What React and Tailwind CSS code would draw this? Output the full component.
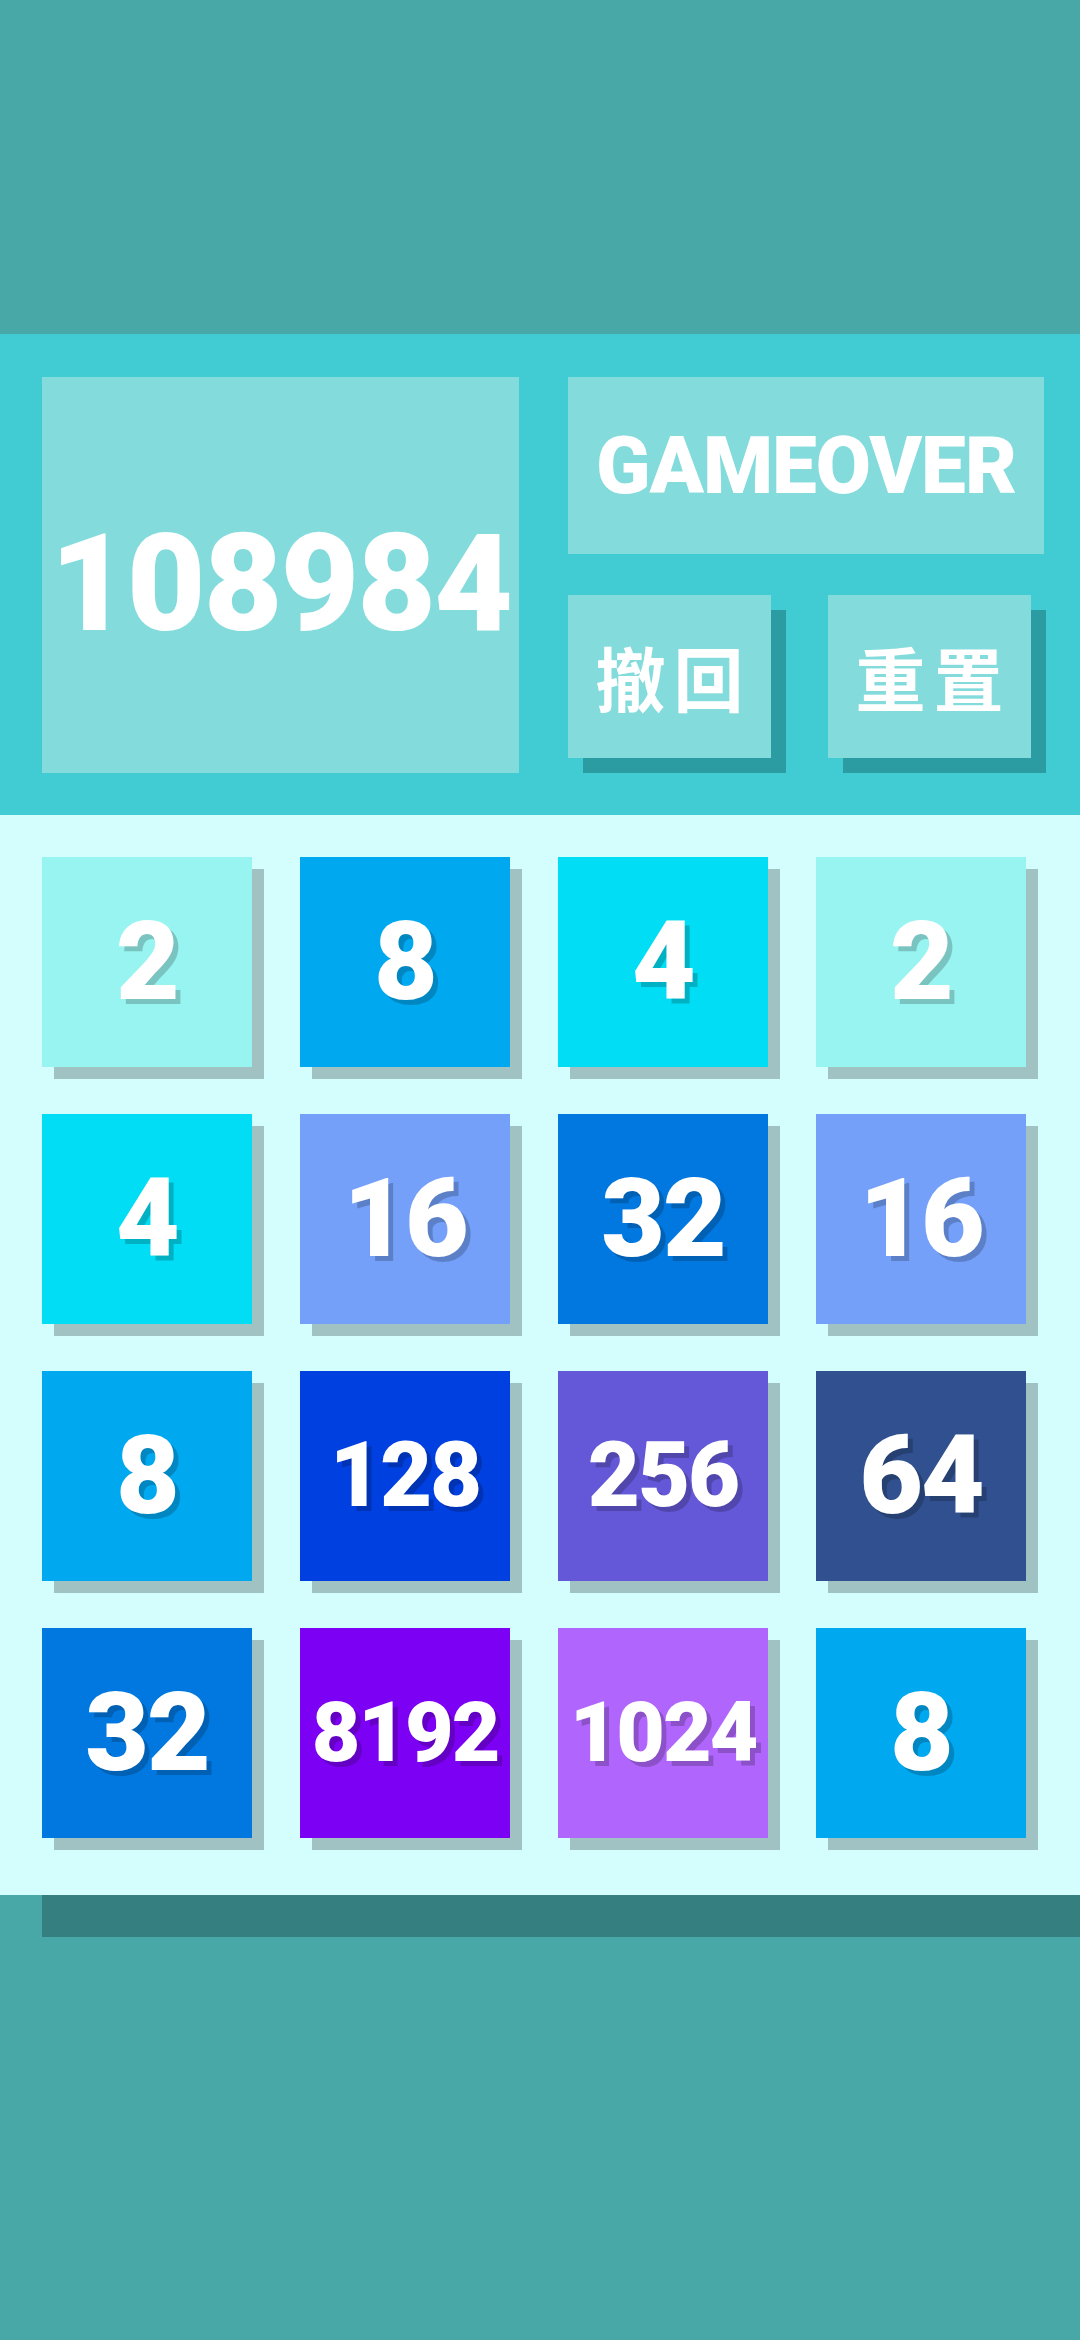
const TILES = [
  [2, 8, 4, 2],
  [4, 16, 32, 16],
  [8, 128, 256, 64],
  [32, 8192, 1024, 8],
];

const TILE_BG = {
  2: 'bg-[#98f4f0]',
  4: 'bg-[#00ddf4]',
  8: 'bg-[#00a8f0]',
  16: 'bg-[#74a0fa]',
  32: 'bg-[#0078e0]',
  64: 'bg-[#30508f]',
  128: 'bg-[#0040e0]',
  256: 'bg-[#6458d8]',
  1024: 'bg-[#b066fc]',
  8192: 'bg-[#7c00f4]',
};

function Tile({ value }) {
  const digits = String(value).length;
  let size = 'text-[110px]';
  if (digits === 3) size = 'text-[90px]';
  if (digits >= 4) size = 'text-[84px]';
  return (
    <div
      className={`w-[210px] h-[210px] flex items-center justify-center shadow-[12px_12px_0_#a0c2c2] ${TILE_BG[value]}`}
    >
      <span
        className={`${size} leading-none font-black text-white tracking-[-2px] [text-shadow:5px_5px_0_rgba(0,0,0,0.2)]`}
      >
        {value}
      </span>
    </div>
  );
}

export default function App() {
  return (
    <div className="w-[1080px] h-[2340px] flex flex-col bg-[#48a8a8] font-['Roboto','Noto_Sans_CJK_SC',sans-serif]">
      {/* top band */}
      <div className="h-[334px] shrink-0 bg-[#48a8a8]" />

      {/* header */}
      <div className="h-[481px] shrink-0 bg-[#40ccd2] pl-[42px] pt-[43px] flex gap-[49px]">
        <div className="w-[477px] h-[396px] bg-[#83dbdc] flex items-center justify-center pt-[18px]">
          <span className="text-[136px] leading-none font-black text-white tracking-[-2px]">108984</span>
        </div>
        <div className="w-[476px] flex flex-col gap-[41px]">
          <div className="h-[177px] bg-[#83dbdc] flex items-center justify-center">
            <span className="text-[80px] leading-none font-black text-white tracking-[-1px]">GAMEOVER</span>
          </div>
          <div className="flex gap-[57px]">
            <button className="w-[203px] h-[163px] bg-[#83dbdc] shadow-[15px_15px_0_#2c9ca3] flex items-center justify-center">
              <span className="text-[70px] leading-none font-bold text-white tracking-[8px] pl-[8px] font-['Noto_Sans_CJK_SC',sans-serif]">撤回</span>
            </button>
            <button className="w-[203px] h-[163px] bg-[#83dbdc] shadow-[15px_15px_0_#2c9ca3] flex items-center justify-center">
              <span className="text-[70px] leading-none font-bold text-white tracking-[8px] pl-[8px] font-['Noto_Sans_CJK_SC',sans-serif]">重置</span>
            </button>
          </div>
        </div>
      </div>

      {/* board */}
      <div className="h-[1080px] shrink-0 bg-[#d4fefe] pl-[42px] pt-[42px]">
        <div className="grid grid-cols-[repeat(4,210px)] gap-x-[48px] gap-y-[47px]">
          {TILES.flat().map((v, i) => (
            <Tile key={i} value={v} />
          ))}
        </div>
      </div>

      {/* bottom strip */}
      <div className="h-[42px] shrink-0 ml-[42px] bg-[#367f80]" />
      <div className="flex-1 bg-[#48a8a8]" />
    </div>
  );
}
